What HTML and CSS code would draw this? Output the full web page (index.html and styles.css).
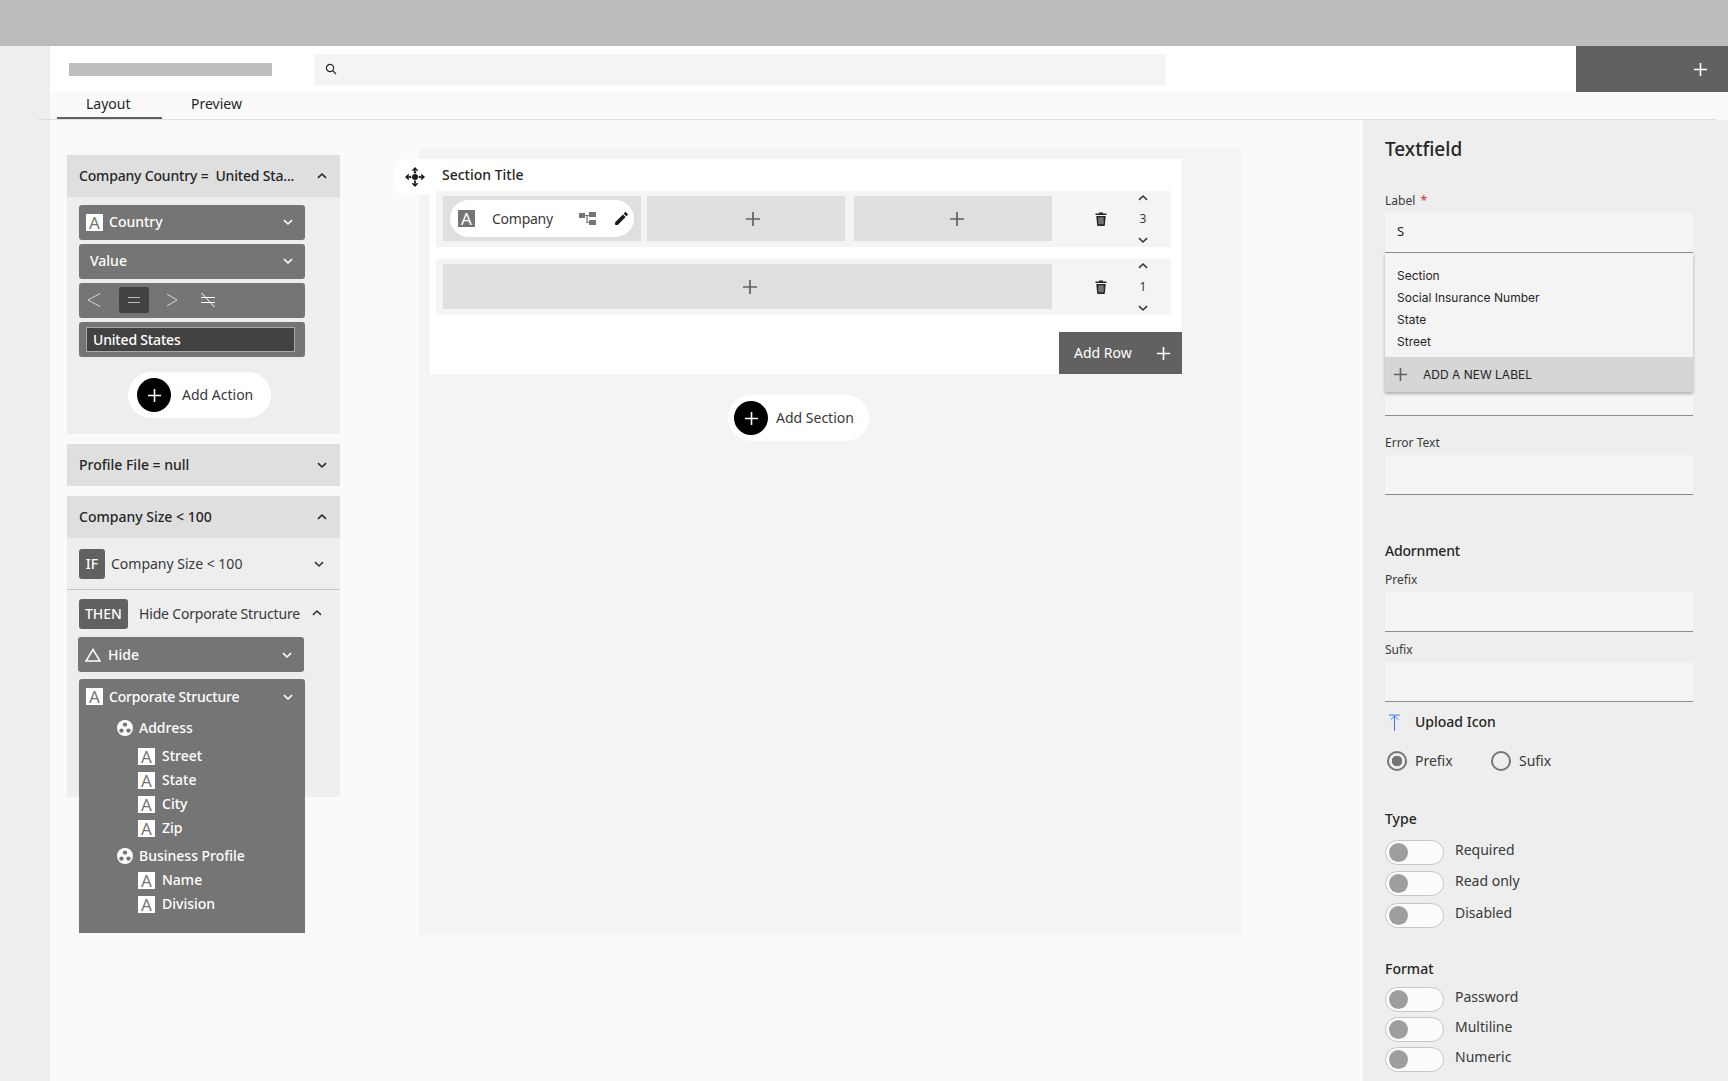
FILE: index.html
```html
<!DOCTYPE html>
<html lang="en">
<head>
<meta charset="utf-8">
<title>Form builder</title>
<link rel="stylesheet" href="styles.css">
</head>
<body>
<svg class="sprite" aria-hidden="true">
  <symbol id="down" viewBox="0 0 12 12"><path d="M2 4.200 6 8l4-3.800" fill="none" stroke="currentColor" stroke-width="1.600"/></symbol>
  <symbol id="up" viewBox="0 0 12 12"><path d="M2 7.800 6 4l4 3.800" fill="none" stroke="currentColor" stroke-width="1.600"/></symbol>
  <symbol id="plus" viewBox="0 0 16 16"><path d="M8 1v14M1 8h14" fill="none" stroke="currentColor" stroke-width="1.700"/></symbol>
  <symbol id="group" viewBox="0 0 16 16"><circle cx="8" cy="8" r="8" fill="#fff"/><circle cx="8" cy="4.600" r="2.200" fill="#757575"/><circle cx="4.500" cy="10.600" r="2.200" fill="#757575"/><circle cx="11.500" cy="10.600" r="2.200" fill="#757575"/></symbol>
  <symbol id="trash" viewBox="0 0 12 14"><path d="M4 1.500V.5h4v1h3.500v1.600H.5V1.500zM1.300 4h9.400l-.8 9a1 1 0 0 1-1 1H3.100a1 1 0 0 1-1-1z" fill="#262626"/><rect x="3.300" y="5.200" width="5.400" height="7" rx=".5" fill="#757575"/></symbol>
</svg>

<div class="topbar"></div>
<div class="shell">
  <div class="strip"></div>
  <div class="main">
    <header class="header">
      <div class="logo"></div>
      <div class="search">
        <svg class="search-icon" viewBox="0 0 12 12"><circle cx="5" cy="5" r="3.600" fill="none" stroke="#262626" stroke-width="1.200"/><path d="m7.700 7.700 3.300 3.300" stroke="#262626" stroke-width="1.200"/></svg>
      </div>
      <div class="header-action"><svg class="icon-15"><use href="#plus"/></svg></div>
    </header>

    <nav class="tabs">
      <a class="tab tab-active">Layout</a>
      <a class="tab">Preview</a>
    </nav>

    <div class="workspace">
      <aside class="rail">
        <section class="acc">
          <div class="acc-head"><span class="tight">Company Country =&nbsp; United Sta...</span><svg class="icon-12"><use href="#up"/></svg></div>
          <div class="acc-body acc-body-first">
            <div class="ctl"><span class="type-a">A</span><span class="ctl-text">Country</span><svg class="icon-12 ctl-chev"><use href="#down"/></svg></div>
            <div class="ctl ctl-value"><span class="ctl-text">Value</span><svg class="icon-12 ctl-chev"><use href="#down"/></svg></div>
            <div class="ctl ctl-ops">
              <svg class="op op-lt" viewBox="0 0 14 14"><path d="M13 .5 1 7l12 6.500" fill="none" stroke="#d6d6d6" stroke-width="1"/></svg>
              <span class="op-box"><svg class="op-eq" viewBox="0 0 12 8"><path d="M0 1.500h12M0 6.500h12" stroke="#bdbdbd" stroke-width="1"/></svg></span>
              <svg class="op op-gt" viewBox="0 0 14 14"><path d="M2 1 12 7 2 13" fill="none" stroke="#d6d6d6" stroke-width="1"/></svg>
              <svg class="op op-ne" viewBox="0 0 16 16"><path d="M1 5.500h14M1 10.500h14M1.500 1 14.500 15" fill="none" stroke="#fff" stroke-width="1"/></svg>
            </div>
            <div class="ctl ctl-input"><div class="value-box tight">United States</div></div>
            <div class="pill pill-action"><span class="pill-dot"><svg class="icon-15"><use href="#plus"/></svg></span><span>Add Action</span></div>
          </div>
        </section>

        <section class="acc">
          <div class="acc-head"><span>Profile File = null</span><svg class="icon-12"><use href="#down"/></svg></div>
        </section>

        <section class="acc">
          <div class="acc-head"><span>Company Size &lt; 100</span><svg class="icon-12"><use href="#up"/></svg></div>
          <div class="acc-body acc-body-rule">
            <div class="rule-if">
              <span class="badge">IF</span><span class="rule-text">Company Size &lt; 100</span><svg class="icon-12 rule-chev"><use href="#down"/></svg>
            </div>
            <div class="rule-then">
              <span class="badge badge-then">THEN</span><span class="rule-text tight">Hide Corporate Structure</span><svg class="icon-12 then-chev"><use href="#up"/></svg>
            </div>
            <div class="ctl ctl-hide">
              <svg class="tri" viewBox="0 0 16 14"><path d="M8 1.500 15 13H1z" fill="none" stroke="#fff" stroke-width="1.500"/></svg>
              <span class="ctl-text">Hide</span><svg class="icon-12 ctl-chev"><use href="#down"/></svg>
            </div>
            <div class="tree">
              <div class="ctl tree-head"><span class="type-a">A</span><span class="ctl-text tight">Corporate Structure</span><svg class="icon-12 ctl-chev"><use href="#down"/></svg></div>
              <div class="tree-group"><svg class="icon-16"><use href="#group"/></svg><span>Address</span></div>
              <div class="tree-item tree-first"><span class="type-a">A</span><span>Street</span></div>
              <div class="tree-item"><span class="type-a">A</span><span>State</span></div>
              <div class="tree-item"><span class="type-a">A</span><span>City</span></div>
              <div class="tree-item"><span class="type-a">A</span><span>Zip</span></div>
              <div class="tree-group tree-group-next"><svg class="icon-16"><use href="#group"/></svg><span>Business Profile</span></div>
              <div class="tree-item"><span class="type-a">A</span><span>Name</span></div>
              <div class="tree-item"><span class="type-a">A</span><span>Division</span></div>
            </div>
          </div>
        </section>
      </aside>

      <main class="canvas">
        <section class="form-section">
          <div class="drag">
            <svg class="drag-icon" viewBox="0 0 20 20" fill="#1a1a1a"><circle cx="10" cy="10" r="3"/><path d="M10 0 13.500 3.800H6.500zM10 20l3.500-3.800h-7zM0 10l3.800-3.500v7zM20 10l-3.800-3.500v7z"/><circle cx="10" cy="5.200" r="1.200"/><circle cx="10" cy="14.800" r="1.200"/><circle cx="5.200" cy="10" r="1.200"/><circle cx="14.800" cy="10" r="1.200"/></svg>
          </div>
          <div class="section-title">Section Title</div>

          <div class="row">
            <div class="cells">
              <div class="cell cell-1">
                <div class="chip">
                  <span class="type-a type-a-dark">A</span>
                  <span class="chip-label tight">Company</span>
                  <svg class="tree-icon" viewBox="0 0 17 14"><path d="M0 1h6v5H0zM10 0h7v5h-7zM10 8h7v5h-7z" fill="#757575"/><path d="M6 3.500h4M8 3.500v7h2" fill="none" stroke="#757575" stroke-width="1.200"/></svg>
                  <svg class="pencil" viewBox="0 0 24 24"><path d="M3 17.250V21h3.750L17.810 9.940l-3.750-3.750L3 17.250zM20.710 7.040a1 1 0 0 0 0-1.410l-2.340-2.340a1 1 0 0 0-1.410 0l-1.830 1.830 3.750 3.750 1.830-1.830z" fill="#1a1a1a"/></svg>
                </div>
              </div>
              <div class="cell cell-2"><svg class="icon-16 gray"><use href="#plus"/></svg></div>
              <div class="cell cell-3"><svg class="icon-16 gray"><use href="#plus"/></svg></div>
            </div>
            <svg class="trash"><use href="#trash"/></svg>
            <div class="order"><svg class="icon-12"><use href="#up"/></svg><span>3</span><svg class="icon-12"><use href="#down"/></svg></div>
          </div>

          <div class="row">
            <div class="cells">
              <div class="cell cell-wide"><svg class="icon-16 gray"><use href="#plus"/></svg></div>
            </div>
            <svg class="trash"><use href="#trash"/></svg>
            <div class="order"><svg class="icon-12"><use href="#up"/></svg><span>1</span><svg class="icon-12"><use href="#down"/></svg></div>
          </div>

          <div class="add-row"><span>Add Row</span><svg class="icon-15"><use href="#plus"/></svg></div>
        </section>

        <div class="pill pill-section"><span class="pill-dot"><svg class="icon-15"><use href="#plus"/></svg></span><span>Add Section</span></div>
      </main>

      <aside class="panel">
        <h2 class="panel-title">Textfield</h2>

        <div class="field field-label">
          <div class="field-name">Label <span class="req">*</span></div>
          <div class="input input-filled">S</div>
          <div class="menu">
            <ul class="menu-list">
              <li>Section</li>
              <li>Social Insurance Number</li>
              <li>State</li>
              <li>Street</li>
            </ul>
            <div class="menu-add"><svg class="icon-15 gray"><use href="#plus"/></svg><span>ADD A NEW LABEL</span></div>
          </div>
        </div>

        <div class="input input-hidden-field"></div>

        <div class="field field-error">
          <div class="field-name">Error Text</div>
          <div class="input"></div>
        </div>

        <h3 class="group-title group-adornment tight">Adornment</h3>
        <div class="field field-prefix">
          <div class="field-name">Prefix</div>
          <div class="input"></div>
        </div>
        <div class="field field-sufix">
          <div class="field-name">Sufix</div>
          <div class="input"></div>
        </div>

        <div class="upload">
          <svg class="upload-icon" viewBox="0 0 14 18"><path d="M1 1h12M7 2v16M3 6l4-4 4 4" fill="none" stroke="#0f62fe" stroke-width=".9"/></svg>
          <span>Upload Icon</span>
        </div>

        <div class="radios">
          <label class="radio radio-first"><span class="radio-mark radio-on"></span><span>Prefix</span></label>
          <label class="radio"><span class="radio-mark"></span><span>Sufix</span></label>
        </div>

        <h3 class="group-title group-type">Type</h3>
        <div class="toggles toggles-type">
          <div class="toggle-row"><span class="toggle"></span><span>Required</span></div>
          <div class="toggle-row"><span class="toggle"></span><span>Read only</span></div>
          <div class="toggle-row"><span class="toggle"></span><span>Disabled</span></div>
        </div>

        <h3 class="group-title group-format">Format</h3>
        <div class="toggles toggles-format">
          <div class="toggle-row"><span class="toggle"></span><span>Password</span></div>
          <div class="toggle-row"><span class="toggle"></span><span>Multiline</span></div>
          <div class="toggle-row"><span class="toggle"></span><span>Numeric</span></div>
        </div>
      </aside>
    </div>
  </div>
</div>
</body>
</html>
```
FILE: styles.css
```css
* { box-sizing: border-box; }
html, body { margin: 0; height: 1081px; overflow: hidden; }
body { background: #fafafa; color: #262626; font: 400 14px/20px "Noto Sans", sans-serif; }
.sprite { position: absolute; width: 0; height: 0; }
svg { display: block; flex: none; }
.icon-12 { width: 12px; height: 12px; }
.icon-15 { width: 15px; height: 15px; }
.icon-16 { width: 16px; height: 16px; }
.gray { color: #616161; }
.tight { letter-spacing: -.18px; }

.topbar { height: 46px; background: #bcbcbc; }
.shell { display: flex; height: 1035px; }
.strip { width: 50px; background: #eee; }
.main { flex: 1; min-width: 0; display: flex; flex-direction: column; }

.header { height: 46px; background: #fff; display: flex; align-items: center; padding-left: 19px; }
.logo { width: 203px; height: 13px; background: #bebebe; }
.search { width: 852px; height: 31px; margin-left: 42px; background: #f4f4f4; display: flex; align-items: center; padding-left: 11px; }
.search-icon { width: 12px; height: 12px; }
.header-action { width: 152px; height: 46px; margin-left: auto; background: #616161; color: #fff; display: flex; align-items: center; justify-content: flex-end; padding-right: 20px; }

.tabs { height: 28px; margin: 0 12px 0 -12px; padding-left: 19px; display: flex; border-bottom: 1px solid #ddd; }
.tab { height: 27px; padding-top: 2px; line-height: 20px; }
.tab-active { width: 105px; padding-left: 29px; border-bottom: 2px solid #616161; }
.tab:not(.tab-active) { margin-left: 29px; }

.workspace { flex: 1; display: flex; min-height: 0; }

/* left rail */
.rail { width: 273px; margin: 35px 0 0 17px; flex: none; }
.acc { margin-bottom: 10px; }
.acc-head { height: 42px; padding: 0 12px; background: #dfdfdf; display: flex; align-items: center; justify-content: space-between; font-weight: 500; color: #262626; }
.acc-body { background: #eee; }
.acc-body-first { height: 237px; padding: 8px 0 0 12px; }
.acc-body-rule { height: 259px; }
.ctl { width: 226px; height: 35px; margin-bottom: 4px; background: #757575; border-radius: 3px; color: #fff; display: flex; align-items: center; padding-left: 7px; font-weight: 500; line-height: 18px; padding-bottom: 1px; }
.ctl-text { margin-left: 6px; }
.ctl-value .ctl-text { margin-left: 4px; }
.ctl-chev { margin-left: auto; margin-right: 11px; }
.type-a { width: 17px; height: 17px; background: #fff; color: #757575; display: flex; align-items: center; justify-content: center; flex: none; font-size: 17px; line-height: 17px; font-weight: 400; }
.type-a-dark { background: #757575; color: #fff; }
.ctl-ops { padding-left: 0; }
.op { width: 14px; height: 14px; }
.op-lt { margin-left: 8px; }
.op-box { width: 30px; height: 26px; margin-left: 18px; background: #424242; border-radius: 2px; display: flex; align-items: center; justify-content: center; }
.op-eq { width: 12px; height: 8px; }
.op-gt { margin-left: 16px; }
.op-ne { width: 16px; height: 16px; margin-left: 21px; }
.ctl-input { padding-left: 7px; padding-bottom: 0; }
.value-box { width: 209px; height: 25px; background: #424242; border: 1px solid #a8a8a8; padding-left: 6px; line-height: 23px; color: #fff; }

.pill { background: #fff; border-radius: 23px; display: flex; align-items: center; height: 46px; color: #393939; }
.pill-dot { width: 34px; height: 34px; border-radius: 50%; background: #000; color: #fff; display: flex; align-items: center; justify-content: center; }
.pill-action { width: 143px; margin: 15px 0 0 49px; padding-left: 9px; gap: 11px; }
.pill-section { width: 141px; margin: 21px 0 0 298px; padding-left: 6px; gap: 8px; }

.rule-if { height: 52px; padding: 11px 0 0 12px; border-bottom: 1px solid #c6c6c6; display: flex; align-items: flex-start; color: #393939; }
.badge { height: 30px; width: 26px; border-radius: 3px; background: #616161; color: #fff; font-weight: 500; display: flex; align-items: center; justify-content: center; flex: none; }
.badge-then { width: 49px; }
.rule-text { margin-left: 6px; line-height: 30px; white-space: nowrap; }
.rule-chev { margin: 9px 0 0 auto; margin-right: 15px; }
.rule-then { height: 47px; padding: 9px 0 0 12px; display: flex; align-items: flex-start; color: #393939; }
.rule-then .rule-text { margin-left: 11px; }
.then-chev { margin: 8px 0 0 auto; margin-right: 17px; }
.ctl-hide { margin: 0 0 7px 11px; padding-bottom: 0; }
.ctl-hide .ctl-text { margin-left: 7px; }
.tri { width: 16px; height: 14px; }
.tree { width: 226px; height: 254px; margin-left: 12px; background: #757575; border-radius: 3px 3px 0 0; color: #fff; font-weight: 500; }
.tree-head { height: 33px; margin-bottom: 4px; background: none; padding-top: 2px; padding-bottom: 0; }
.tree-group { height: 24px; padding-left: 38px; display: flex; align-items: center; gap: 6px; }
.tree-group-next { margin-top: 4px; }
.tree-item { height: 24px; padding-left: 59px; display: flex; align-items: center; gap: 7px; }
.tree-first { margin-top: 4px; }

/* canvas */
.canvas { width: 823px; height: 786px; margin: 29px 0 0 79px; padding: 10px 0 0 11px; background: #f4f4f4; flex: none; }
.form-section { width: 752px; height: 215px; background: #fff; position: relative; padding-left: 6px; }
.drag { position: absolute; left: -35px; top: 0; width: 40px; height: 36px; background: #fff; border-radius: 8px 0 0 8px; display: flex; align-items: center; justify-content: center; }
.drag-icon { width: 20px; height: 20px; }
.section-title { height: 32px; padding: 6px 0 0 6px; font-weight: 500; position: relative; }
.row { width: 735px; height: 56px; margin-bottom: 12px; padding: 5px 0 6px 7px; background: #f4f4f4; display: flex; align-items: center; }
.cells { width: 609px; height: 45px; display: flex; flex: none; }
.cell { background: #dfdfdf; display: flex; align-items: center; justify-content: center; height: 45px; }
.cell-1 { width: 198px; padding: 4px 7px; }
.cell-2 { width: 198px; margin-left: 6px; padding-left: 13px; }
.cell-3 { width: 198px; margin-left: 9px; padding-left: 8px; }
.cell-wide { width: 609px; padding-left: 5px; }
.chip { width: 184px; height: 37px; border-radius: 19px; background: #fff; display: flex; align-items: center; padding-left: 8px; color: #393939; }
.chip-label { margin-left: 17px; letter-spacing: -.25px; }
.tree-icon { width: 17px; height: 14px; margin-left: auto; }
.pencil { width: 17px; height: 17px; margin: 0 4px 0 17px; }
.trash { width: 12px; height: 14px; margin-left: 43px; }
.order { width: 12px; margin-left: 30px; height: 56px; display: flex; flex-direction: column; align-items: center; justify-content: space-between; color: #393939; font-size: 12px; padding: 1px 0; margin-top: -5px; margin-bottom: -6px; }
.order span { line-height: 16px; }
.add-row { position: absolute; right: 0; bottom: 0; width: 123px; height: 42px; background: #616161; color: #fff; display: flex; align-items: center; padding: 0 11px 0 15px; justify-content: space-between; }

/* right panel */
.panel { width: 365px; margin-left: auto; background: #eee; padding: 17px 35px 0 22px; flex: none; }
.panel-title { margin: 0; font-size: 19px; line-height: 24px; font-weight: 500; color: #262626; position: relative; }
.field { position: relative; }
.field-name { height: 16px; margin-bottom: 4px; font-size: 12px; line-height: 16px; color: #393939; }
.req { color: #da1e28; margin-left: 2px; }
.input { height: 40px; background: #f4f4f4; border-bottom: 1px solid #8d8d8d; font-size: 13px; line-height: 37px; padding-left: 12px; }
.field-label { margin-top: 32px; }
.input-hidden-field { margin-top: 123px; }
.field-error { margin-top: 19px; }
.field-prefix { margin-top: 11px; }
.field-sufix { margin-top: 10px; }
.menu { position: absolute; left: 0; right: 0; top: 60px; height: 139px; background: #f4f4f4; box-shadow: 0 2px 3px rgba(0,0,0,.28); z-index: 2; font-family: Inter, sans-serif; font-size: 12px; display: flex; flex-direction: column; justify-content: space-between; }
.menu-list { list-style: none; margin: 0; padding: 12px 12px 0; }
.menu-list li { height: 22px; line-height: 22px; }
.menu-add { height: 35px; background: #d6d6d6; display: flex; align-items: center; padding-left: 8px; gap: 15px; }
.group-title { margin: 0; height: 20px; font-size: 14px; line-height: 20px; font-weight: 500; color: #262626; }
.group-adornment { margin-top: 46px; }
.upload { height: 20px; margin-top: 10px; padding-left: 3px; display: flex; align-items: center; gap: 14px; font-weight: 500; color: #262626; }
.upload-icon { width: 13px; height: 17px; }
.radios { display: flex; margin-top: 19px; padding-left: 2px; color: #393939; }
.radio { display: flex; align-items: center; gap: 8px; height: 20px; }
.radio-first { width: 104px; }
.radio-mark { width: 20px; height: 20px; border-radius: 50%; border: 2px solid #757575; display: block; flex: none; }
.radio-on { background: radial-gradient(circle, #757575 0 5px, transparent 5.500px); }
.group-type { margin-top: 38px; }
.group-format { margin-top: 31px; }
.toggles { display: flex; flex-direction: column; color: #393939; }
.toggles-type { margin-top: 11px; gap: 6px; }
.toggles-type .toggle-row:last-child { margin-top: 1px; }
.toggles-format { margin-top: 8px; gap: 5px; }
.toggle-row { height: 25px; display: flex; align-items: flex-start; gap: 11px; line-height: 20px; }
.toggle { width: 59px; height: 25px; border-radius: 13px; border: 1px solid #c6c6c6; background: #fcfcfc; flex: none; display: flex; align-items: center; padding-left: 3px; }
.toggle::before { content: ""; width: 19px; height: 19px; border-radius: 50%; background: #9e9e9e; }
```
